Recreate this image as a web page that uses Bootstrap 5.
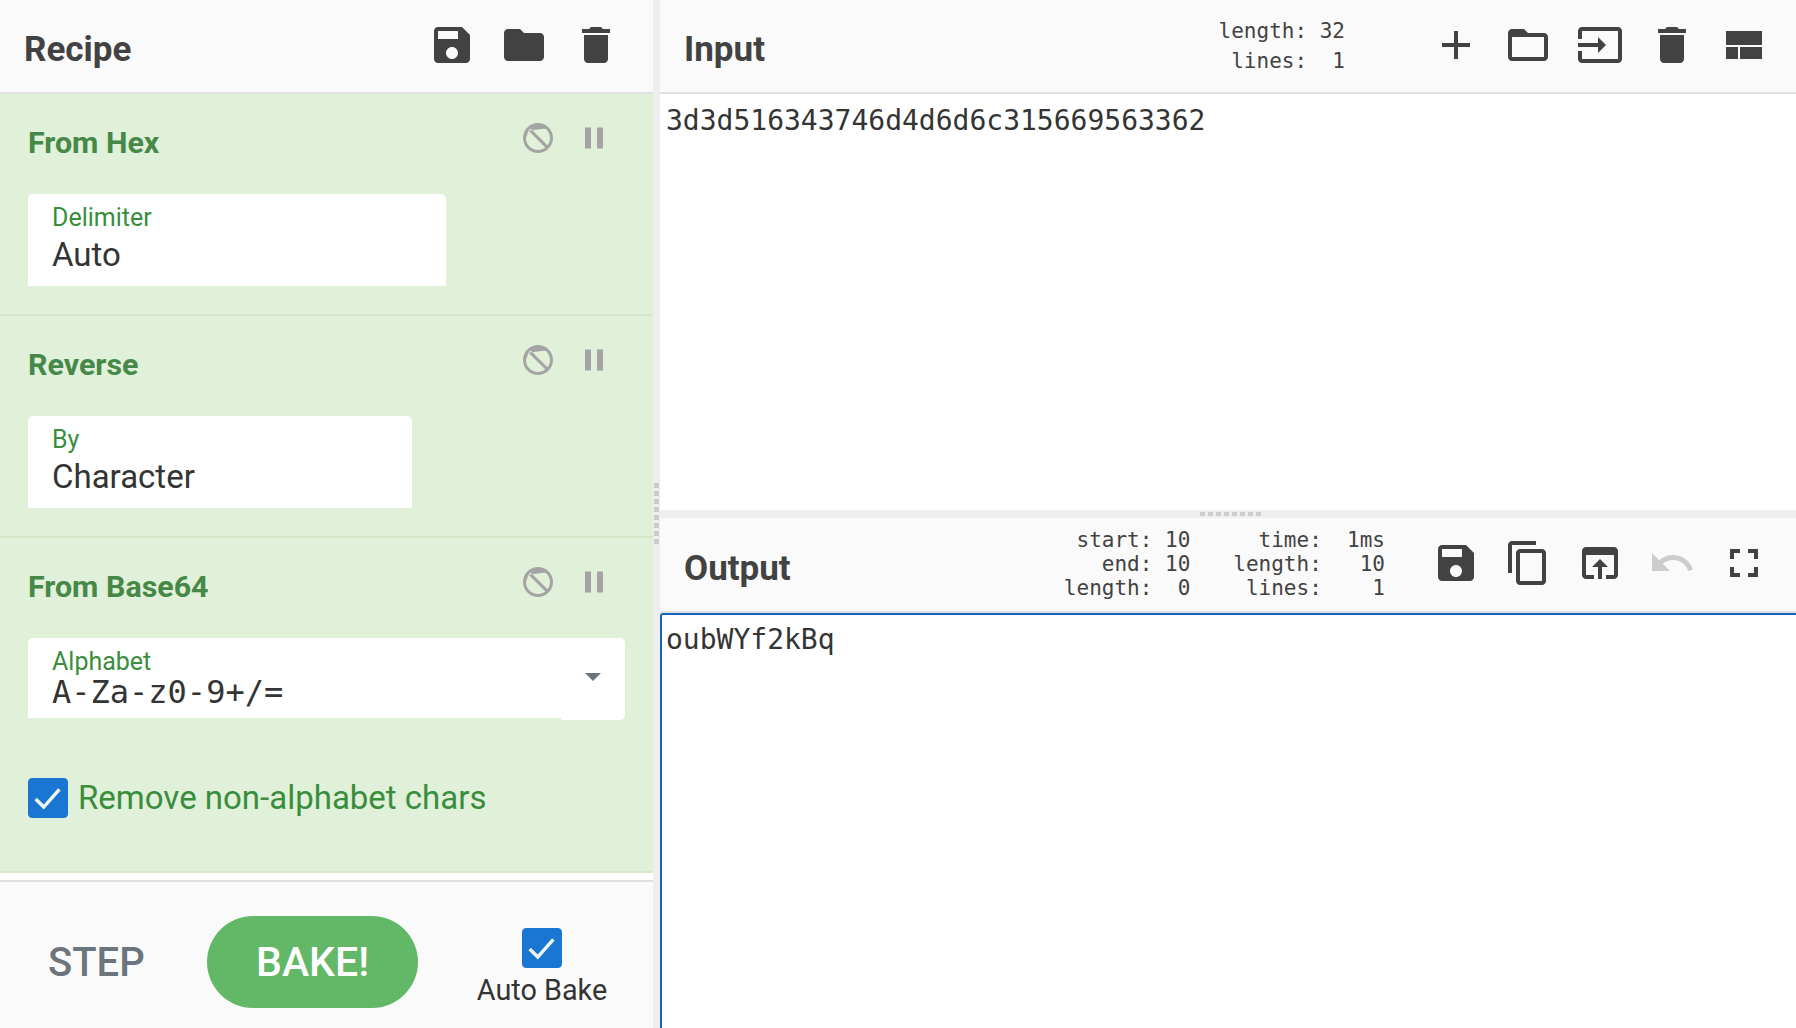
<!DOCTYPE html>
<html lang="en"><head><meta charset="utf-8"><title>CyberChef</title>
<link href="https://cdn.jsdelivr.net/npm/bootstrap@5.3.0/dist/css/bootstrap.min.css" rel="stylesheet">
<style>
html,body{height:100%;overflow:hidden}
body{font-family:Roboto,"Liberation Sans",sans-serif;color:#343434;background:#fff}
.app-shell{height:1028px}
.left-pane{width:653px;flex:none}
.v-gutter{width:7px;flex:none;background:#eee}
.v-dots{width:5px;height:62px;background:repeating-linear-gradient(to bottom,#ccc 0 5px,transparent 5px 8px)}
.h-gutter{height:8px;flex:none;background:#eee}
.h-dots{width:62px;height:4px;margin-left:5px;background:repeating-linear-gradient(to right,#ccc 0 5px,transparent 5px 8px)}
.pane-head{background:#fafafa;border-bottom:2px solid #e0e0e0;height:94px;flex:none;padding-left:24px;padding-bottom:2px}
.pane-title{font-size:35px;font-weight:700;color:#424242;line-height:1;padding-top:8px}
.out-head .pane-title{padding-top:10px}
.tool-btn{width:72px;height:72px;flex:none;color:#424242;fill:currentColor;background:none;border:0;padding:12px}
.tool-btn svg,.op-btn svg{display:block;width:100%;height:100%}
.tool-muted{color:#ccc}
.tool-row{padding-right:16px}
.tool-row-recipe{padding-right:21px}
.tool-row-out{margin-top:-2px}
.recipe-op{background:#e1f0d9;border-bottom:2px solid #d6e9c6;height:222px;padding:0 28px;flex:none}
.recipe-op.op-tall{height:335px}
.op-top{height:88px}
.op-name{font-size:30.4px;font-weight:700;color:#468847;line-height:1;padding-top:10px}
.op-btn{width:36px;height:36px;margin-left:20px;color:#a4a4a4;fill:currentColor;padding:0;border:0;background:none}
.op-icons{margin-right:13px;margin-top:-1px}
.field-box{background:#fff;height:92px;border-radius:5px 5px 0 0;padding:10px 24px 0;margin-top:12px}
.field-w1{width:418px}.field-w2{width:384px}
.field-label{font-size:25px;line-height:28px;color:#388e3c}
.field-value{font-size:33px;line-height:46px;color:#343434}
.alpha-wrap{width:597px;margin-top:12px}
.alpha-main{background:#fff;height:80px;border-radius:5px 0 0 0;padding:10px 24px 0}
.alpha-value{font-family:"DejaVu Sans Mono","Liberation Mono",monospace;font-size:32px;line-height:32px;color:#343434}
.alpha-drop{background:#fff;width:64px;height:82px;flex:none;border-radius:0 5px 5px 0;padding-top:35px}
.drop-caret{width:0;height:0;border-left:8px solid transparent;border-right:8px solid transparent;border-top:8px solid #6c757d}
.check-line{margin-top:58px}
.check-box.form-check-input{width:40px;height:40px;margin:0;flex:none;border-radius:4px;background-color:#1976d2;border-color:#1976d2;opacity:1;background-size:100% 100%;background-image:url("data:image/svg+xml,%3csvg xmlns='http://www.w3.org/2000/svg' viewBox='0 0 40 40'%3e%3cpath fill='none' stroke='%23eef7ea' stroke-width='3.6' d='M7 21l8.5 8.5L32 11'/%3e%3c/svg%3e")}
.check-text{font-size:33px;color:#388e3c;line-height:40px;margin-left:10px}
.recipe-list{flex:1;min-height:0;background:#fff}
.bake-bar{height:148px;flex:none;background:#fafafa;border-top:2px solid #e0e0e0;padding-top:14px}
.step-btn{font-size:40px;font-weight:500;color:#6c757d;width:96px;margin-left:48px;line-height:1;background:none;border:0;padding:2px 0 0}
.bake-btn{width:211px;height:92px;margin-left:63px;border-radius:46px;background:#62b866;color:#fff;border:0;font-size:41px;font-weight:500;padding:2px 0 0}
.auto-wrap{width:140px;margin-left:54px;padding-top:9px}
.auto-text{font-size:28.8px;line-height:30px;color:#343434;margin-top:7px;white-space:nowrap}
.right-pane{min-width:0}
.input-body,.output-body{font-family:"DejaVu Sans Mono","Liberation Mono",monospace;font-size:28px;line-height:38px;color:#343434}
.input-body{height:416px;flex:none;padding:8px 6px}
.output-body{flex:1;border-top:2px solid #1565c0;border-left:2px solid #1565c0;border-radius:3px 0 0 0;padding:6px 4px}
.out-head{height:95px}
.stat-block{font-family:"DejaVu Sans Mono","Liberation Mono",monospace;font-size:21px;color:#424242;white-space:pre;text-align:right;margin:0}
.stat-in{line-height:30px;margin-right:75px;margin-top:2px}
.stat-out{line-height:24px}
.stat-gap{margin-left:43px;margin-right:35px}
</style></head>
<body>
<div class="app-shell d-flex">
 <div class="left-pane d-flex flex-column">
  <div class="pane-head d-flex align-items-center">
   <div class="pane-title flex-grow-1">Recipe</div>
   <div class="d-flex tool-row-recipe">
    <button class="tool-btn"><svg viewBox="0 0 24 24"><path d="M17 3H5c-1.11 0-2 .9-2 2v14c0 1.1.89 2 2 2h14c1.1 0 2-.9 2-2V7l-4-4zm-5 16c-1.66 0-3-1.34-3-3s1.34-3 3-3 3 1.34 3 3-1.34 3-3 3zm3-10H5V5h10v4z"/></svg></button>
    <button class="tool-btn"><svg viewBox="0 0 24 24"><path d="M10 4H4c-1.1 0-1.99.9-1.99 2L2 18c0 1.1.9 2 2 2h16c1.1 0 2-.9 2-2V8c0-1.1-.9-2-2-2h-8l-2-2z"/></svg></button>
    <button class="tool-btn"><svg viewBox="0 0 24 24"><path d="M6 19c0 1.1.9 2 2 2h8c1.1 0 2-.9 2-2V7H6v12zM19 4h-3.5l-1-1h-5l-1 1H5v2h14V4z"/></svg></button>
   </div>
  </div>
  <div class="recipe-op">
   <div class="op-top d-flex align-items-center justify-content-between">
    <div class="op-name">From Hex</div>
    <div class="op-icons d-flex">
     <button class="op-btn"><svg viewBox="0 0 24 24"><path d="M12 2C6.48 2 2 6.48 2 12s4.48 10 10 10 10-4.48 10-10S17.52 2 12 2zM4 12c0-4.42 3.58-8 8-8 1.85 0 3.55.63 4.9 1.69L5.69 7.1 16.9 18.31C15.55 19.37 13.85 20 12 20c-4.42 0-8-3.58-8-8 0-1.85.63-3.55 1.69-4.9zM18.31 16.9L7.1 5.69C8.45 4.63 10.15 4 12 4c4.42 0 8 3.58 8 8 0 1.85-.63 3.55-1.69 4.9z"/></svg></button>
     <button class="op-btn"><svg viewBox="0 0 24 24"><path d="M6 19h4V5H6v14zm8-14v14h4V5h-4z"/></svg></button>
    </div>
   </div>
   <div class="field-box field-w1"><div class="field-label">Delimiter</div><div class="field-value">Auto</div></div>
  </div>
  <div class="recipe-op">
   <div class="op-top d-flex align-items-center justify-content-between">
    <div class="op-name">Reverse</div>
    <div class="op-icons d-flex">
     <button class="op-btn"><svg viewBox="0 0 24 24"><path d="M12 2C6.48 2 2 6.48 2 12s4.48 10 10 10 10-4.48 10-10S17.52 2 12 2zM4 12c0-4.42 3.58-8 8-8 1.85 0 3.55.63 4.9 1.69L5.69 7.1 16.9 18.31C15.55 19.37 13.85 20 12 20c-4.42 0-8-3.58-8-8 0-1.85.63-3.55 1.69-4.9zM18.31 16.9L7.1 5.69C8.45 4.63 10.15 4 12 4c4.42 0 8 3.58 8 8 0 1.85-.63 3.55-1.69 4.9z"/></svg></button>
     <button class="op-btn"><svg viewBox="0 0 24 24"><path d="M6 19h4V5H6v14zm8-14v14h4V5h-4z"/></svg></button>
    </div>
   </div>
   <div class="field-box field-w2"><div class="field-label">By</div><div class="field-value">Character</div></div>
  </div>
  <div class="recipe-op op-tall">
   <div class="op-top d-flex align-items-center justify-content-between">
    <div class="op-name">From Base64</div>
    <div class="op-icons d-flex">
     <button class="op-btn"><svg viewBox="0 0 24 24"><path d="M12 2C6.48 2 2 6.48 2 12s4.48 10 10 10 10-4.48 10-10S17.52 2 12 2zM4 12c0-4.42 3.58-8 8-8 1.85 0 3.55.63 4.9 1.69L5.69 7.1 16.9 18.31C15.55 19.37 13.85 20 12 20c-4.42 0-8-3.58-8-8 0-1.85.63-3.55 1.69-4.9zM18.31 16.9L7.1 5.69C8.45 4.63 10.15 4 12 4c4.42 0 8 3.58 8 8 0 1.85-.63 3.55-1.69 4.9z"/></svg></button>
     <button class="op-btn"><svg viewBox="0 0 24 24"><path d="M6 19h4V5H6v14zm8-14v14h4V5h-4z"/></svg></button>
    </div>
   </div>
   <div class="alpha-wrap d-flex align-items-start">
    <div class="alpha-main flex-grow-1"><div class="field-label">Alphabet</div><div class="alpha-value">A-Za-z0-9+/=</div></div>
    <div class="alpha-drop d-flex justify-content-center"><div class="drop-caret"></div></div>
   </div>
   <div class="check-line d-flex align-items-center">
    <input class="form-check-input check-box" type="checkbox" checked aria-label="Remove non-alphabet chars">
    <span class="check-text">Remove non-alphabet chars</span>
   </div>
  </div>
  <div class="recipe-list"></div>
  <div class="bake-bar d-flex align-items-center">
   <button class="step-btn">STEP</button>
   <button class="bake-btn">BAKE!</button>
   <div class="auto-wrap d-flex flex-column align-items-center">
    <input class="form-check-input check-box" type="checkbox" checked aria-label="Auto Bake">
    <div class="auto-text">Auto Bake</div>
   </div>
  </div>
 </div>
 <div class="v-gutter d-flex align-items-center justify-content-center"><div class="v-dots"></div></div>
 <div class="right-pane flex-grow-1 d-flex flex-column">
  <div class="pane-head d-flex align-items-center">
   <div class="pane-title flex-grow-1">Input</div>
   <pre class="stat-block stat-in">length: 32
 lines:  1</pre>
   <div class="d-flex tool-row">
    <button class="tool-btn"><svg viewBox="0 0 24 24"><path d="M19 13h-6v6h-2v-6H5v-2h6V5h2v6h6v2z"/></svg></button>
    <button class="tool-btn"><svg viewBox="0 0 24 24"><path d="M20 6h-8l-2-2H4c-1.1 0-1.99.9-1.99 2L2 18c0 1.1.9 2 2 2h16c1.1 0 2-.9 2-2V8c0-1.1-.9-2-2-2zm0 12H4V8h16v10z"/></svg></button>
    <button class="tool-btn"><svg viewBox="0 0 24 24"><path d="M21 3.01H3c-1.1 0-2 .9-2 2V9h2V4.99h18v14.03H3V15H1v4.01c0 1.1.9 1.98 2 1.98h18c1.1 0 2-.88 2-1.98v-14c0-1.11-.9-2-2-2zM11 16l4-4-4-4v3H1v2h10v3z"/></svg></button>
    <button class="tool-btn"><svg viewBox="0 0 24 24"><path d="M6 19c0 1.1.9 2 2 2h8c1.1 0 2-.9 2-2V7H6v12zM19 4h-3.5l-1-1h-5l-1 1H5v2h14V4z"/></svg></button>
    <button class="tool-btn"><svg viewBox="0 0 24 24"><path d="M3 5h18v7H3zM3 13h6v6H3zM10 13h11v6H10z"/></svg></button>
   </div>
  </div>
  <div class="input-body">3d3d516343746d4d6d6c315669563362</div>
  <div class="h-gutter d-flex align-items-center justify-content-center"><div class="h-dots"></div></div>
  <div class="pane-head out-head d-flex align-items-center">
   <div class="pane-title flex-grow-1">Output</div>
   <pre class="stat-block stat-out"> start: 10
   end: 10
length:  0</pre>
   <pre class="stat-block stat-out stat-gap">  time:  1ms
length:   10
 lines:    1</pre>
   <div class="d-flex tool-row tool-row-out">
    <button class="tool-btn"><svg viewBox="0 0 24 24"><path d="M17 3H5c-1.11 0-2 .9-2 2v14c0 1.1.89 2 2 2h14c1.1 0 2-.9 2-2V7l-4-4zm-5 16c-1.66 0-3-1.34-3-3s1.34-3 3-3 3 1.34 3 3-1.34 3-3 3zm3-10H5V5h10v4z"/></svg></button>
    <button class="tool-btn"><svg viewBox="0 0 24 24"><path d="M16 1H4c-1.1 0-2 .9-2 2v14h2V3h12V1zm3 4H8c-1.1 0-2 .9-2 2v14c0 1.1.9 2 2 2h11c1.1 0 2-.9 2-2V7c0-1.1-.9-2-2-2zm0 16H8V7h11v14z"/></svg></button>
    <button class="tool-btn"><svg viewBox="0 0 24 24"><path d="M19 4H5c-1.11 0-2 .9-2 2v12c0 1.1.89 2 2 2h4v-2H5V8h14v10h-4v2h4c1.1 0 2-.9 2-2V6c0-1.1-.89-2-2-2zm-7 6l-4 4h3v6h2v-6h3l-4-4z"/></svg></button>
    <button class="tool-btn tool-muted"><svg viewBox="0 0 24 24"><path d="M12.5 8c-2.65 0-5.05.99-6.9 2.6L2 7v9h9l-3.62-3.62c1.39-1.16 3.16-1.88 5.12-1.88 3.54 0 6.55 2.31 7.6 5.5l2.37-.78C21.08 11.03 17.15 8 12.5 8z"/></svg></button>
    <button class="tool-btn"><svg viewBox="0 0 24 24"><path d="M7 14H5v5h5v-2H7v-3zm-2-4h2V7h3V5H5v5zm12 7h-3v2h5v-5h-2v3zM14 5v2h3v3h2V5h-5z"/></svg></button>
   </div>
  </div>
  <div class="output-body">oubWYf2kBq</div>
 </div>
</div>
<script src="https://cdn.jsdelivr.net/npm/bootstrap@5.3.0/dist/js/bootstrap.bundle.min.js"></script>
</body></html>
